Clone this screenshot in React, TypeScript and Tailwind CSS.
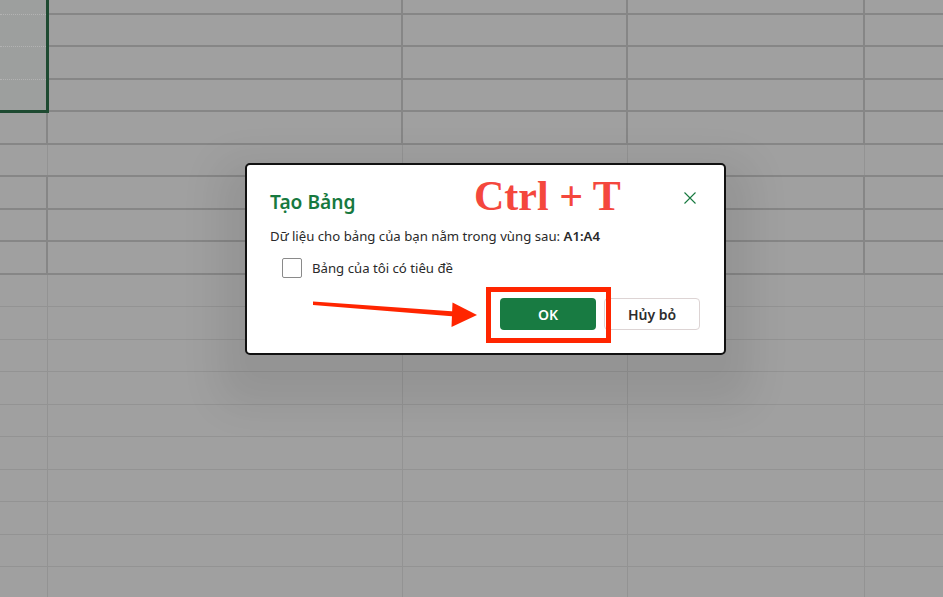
import React from "react";

const rows = Array.from({ length: 19 }, (_, i) => i);

function vLine(row: number, col: number) {
  if (col === 0 && row <= 3) return "border-r-2 border-r-transparent";
  const dark = row <= 8 && row !== 5;
  return dark ? "border-r-2 border-r-[#868686]" : "border-r border-r-[#939393]";
}

export default function App() {
  return (
    <div className="relative w-[943px] h-[597px] overflow-hidden bg-[#a0a0a0]" style={{ fontFamily: '"Noto Sans", "Open Sans", sans-serif' }}>
      {/* spreadsheet grid */}
      <div className="flex flex-col -mt-[18px]">
        {rows.map((r) => (
          <div
            key={r}
            className={
              "flex h-[32.5px] shrink-0 " +
              (r <= 8 ? "border-b-2 border-b-[#868686]" : "border-b border-b-[#939393]")
            }
          >
            <div className={"w-[48px] shrink-0 " + vLine(r, 0)} />
            <div className={"w-[355px] shrink-0 " + vLine(r, 1)} />
            <div className={"w-[225px] shrink-0 " + vLine(r, 2)} />
            <div className={"w-[237px] shrink-0 " + vLine(r, 3)} />
            <div className="flex-1" />
          </div>
        ))}
      </div>

      {/* selection A1:A4 */}
      <div className="absolute left-0 top-0 w-[49px] h-[113px] bg-[#9d9f9e] border-r-[3px] border-b-[3px] border-[#1e4a31] flex flex-col">
        <div className="h-[14.5px] shrink-0 border-b border-dotted border-[#b3b3b3]" />
        <div className="h-[32.5px] shrink-0 border-b border-dotted border-[#b3b3b3]" />
        <div className="h-[32.5px] shrink-0 border-b border-dotted border-[#b3b3b3]" />
      </div>

      {/* dialog */}
      <div className="absolute left-[245px] top-[163px] w-[481px] bg-white border-2 border-[#111] rounded-[5px] shadow-[0_24px_40px_26px_rgba(0,0,0,0.08)] pl-[23px] pr-[24px] pt-[23px] pb-[23px]">
        <div className="flex items-start justify-between">
          <div className="text-[19.2px] leading-[28px] font-semibold text-[#17793f]">Tạo Bảng</div>
          <button className="mt-[4px] mr-[4px] w-[12px] h-[12px] flex items-center justify-center">
            <svg width="12" height="12" viewBox="0 0 12 12" fill="none">
              <path d="M0.5 0.5 L11.5 11.5 M11.5 0.5 L0.5 11.5" stroke="#17793f" strokeWidth="1.1" />
            </svg>
          </button>
        </div>
        <div className="mt-[9.5px] text-[13.2px] leading-[20px] text-[#2a2a2a]">
          Dữ liệu cho bảng của bạn nằm trong vùng sau: <span className="font-semibold">A1:A4</span>
        </div>
        <div className="mt-[12.5px] ml-[12px] flex items-center gap-[10px]">
          <div className="w-[20px] h-[20px] border border-[#8a8a8a] rounded-[2px] bg-white" />
          <span className="text-[13.2px] leading-[20px] text-[#2a2a2a]">Bảng của tôi có tiêu đề</span>
        </div>
        <div className="mt-[20px] flex justify-end gap-[8px]">
          <button className="w-[96px] h-[32px] rounded-[4px] bg-[#187b42] text-white text-[14px] font-semibold">OK</button>
          <button className="w-[96px] h-[32px] rounded-[4px] bg-white border border-[#ddd4d4] text-[#2c2c2c] text-[14px] font-semibold">Hủy bỏ</button>
        </div>

        {/* annotation: Ctrl + T */}
        <div
          className="absolute left-[227px] top-[10px] text-[42px] leading-none font-bold text-[#f4473d] whitespace-nowrap"
          style={{ fontFamily: '"Liberation Serif", "Times New Roman", serif' }}
        >
          Ctrl + T
        </div>
      </div>

      {/* annotation: red box around OK */}
      <div className="absolute left-[486px] top-[287px] w-[125px] h-[56px] border-[5px] border-[#ff2500]" />

      {/* annotation: red arrow */}
      <svg className="absolute left-0 top-0" width="943" height="597" viewBox="0 0 943 597">
        <polygon points="313,301.5 455,311.5 455,316.5 313,305" fill="#ff2500" />
        <polygon points="452.5,302.5 451.5,327 477,315" fill="#ff2500" />
      </svg>
    </div>
  );
}
